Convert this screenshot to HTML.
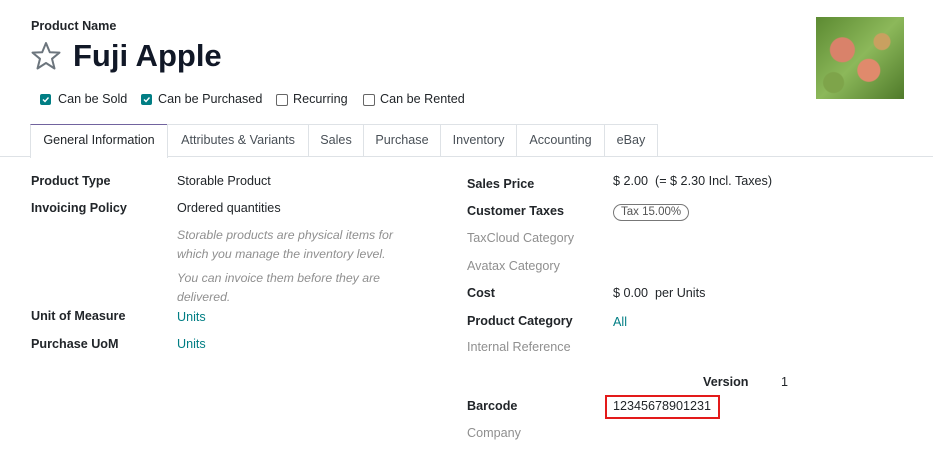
<!DOCTYPE html>
<html><head><style>
body{margin:0;width:933px;height:467px;background:#fff;font-family:"Liberation Sans",sans-serif;color:#212529;position:relative;overflow:hidden;font-size:12.6px}
.a{position:absolute;white-space:nowrap}
.b{font-weight:bold}
.g{color:#8f8f8f}
.l{color:#017e84}
.i{font-style:italic;color:#8f8f8f;font-size:12.3px}
.cb{position:absolute;width:11px;height:11px;border-radius:2px}
.on{background:#017e84}
.off{border:1px solid #666;background:#fff;width:10px;height:10px}
.tab{position:absolute;top:124px;height:32px;border:1px solid #dee2e6;border-bottom:none;box-sizing:border-box;text-align:center;line-height:31px;color:#495057;font-size:12.6px}
</style></head><body>
<div class="a b" style="left:31px;top:19px;font-size:12.6px">Product Name</div>
<svg class="a" style="left:30px;top:41px" width="32" height="30" viewBox="0 0 32 30"><path d="M16 2 L19.8 11.2 L29.5 11.6 L22 17.8 L24.5 27.5 L16 22 L7.5 27.5 L10 17.8 L2.5 11.6 L12.2 11.2 Z" fill="none" stroke="#6c757d" stroke-width="2" stroke-linejoin="round"/></svg>
<div class="a b" style="left:73px;top:38px;font-size:31px;color:#111827">Fuji Apple</div>
<div class="cb on" style="left:40px;top:94px"></div><svg class="a" style="left:40px;top:94px" width="11" height="11"><path d="M3 5.5 L5 7.5 L8.5 3.5" stroke="#fff" stroke-width="1.4" fill="none"/></svg>
<div class="a" style="left:58px;top:92px">Can be Sold</div>
<div class="cb on" style="left:141px;top:94px"></div><svg class="a" style="left:141px;top:94px" width="11" height="11"><path d="M3 5.5 L5 7.5 L8.5 3.5" stroke="#fff" stroke-width="1.4" fill="none"/></svg>
<div class="a" style="left:158px;top:92px">Can be Purchased</div>
<div class="cb off" style="left:276px;top:94px"></div>
<div class="a" style="left:293px;top:92px">Recurring</div>
<div class="cb off" style="left:363px;top:94px"></div>
<div class="a" style="left:380px;top:92px">Can be Rented</div>
<div class="a" style="left:816px;top:17px;width:88px;height:82px;background:radial-gradient(circle at 30% 40%,#d9826a 0 12px,transparent 13px),radial-gradient(circle at 60% 65%,#e08a6c 0 11px,transparent 12px),radial-gradient(circle at 75% 30%,#c9a060 0 8px,transparent 9px),radial-gradient(circle at 20% 80%,#7ea44a 0 10px,transparent 11px),linear-gradient(135deg,#5c8a32,#8cb85a 50%,#4f7a2a)"></div>
<div style="position:absolute;left:0;top:156px;width:933px;border-top:1px solid #dee2e6"></div>
<div class="tab" style="left:30px;width:138px;background:#fff;height:34px;color:#212529;border-top-color:#71639e">General Information</div>
<div class="tab" style="left:167px;width:142px">Attributes &amp; Variants</div>
<div class="tab" style="left:308px;width:56px">Sales</div>
<div class="tab" style="left:363px;width:78px">Purchase</div>
<div class="tab" style="left:440px;width:77px">Inventory</div>
<div class="tab" style="left:516px;width:89px">Accounting</div>
<div class="tab" style="left:604px;width:54px">eBay</div>

<div class="a b" style="left:31px;top:174px">Product Type</div><div class="a" style="left:177px;top:174px">Storable Product</div>
<div class="a b" style="left:31px;top:201px">Invoicing Policy</div><div class="a" style="left:177px;top:201px">Ordered quantities</div>
<div class="a i" style="left:177px;top:228px">Storable products are physical items for</div>
<div class="a i" style="left:177px;top:247px">which you manage the inventory level.</div>
<div class="a i" style="left:177px;top:271px">You can invoice them before they are</div>
<div class="a i" style="left:177px;top:290px">delivered.</div>
<div class="a b" style="left:31px;top:309px">Unit of Measure</div><div class="a l" style="left:177px;top:310px">Units</div>
<div class="a b" style="left:31px;top:337px">Purchase UoM</div><div class="a l" style="left:177px;top:337px">Units</div>

<div class="a b" style="left:467px;top:177px">Sales Price</div><div class="a" style="left:613px;top:174px">$ 2.00 &nbsp;(= $ 2.30 Incl. Taxes)</div>
<div class="a b" style="left:467px;top:204px">Customer Taxes</div>
<div class="a" style="left:613px;top:204px;border:1px solid #777;border-radius:9px;padding:0 7px;font-size:11.5px;line-height:15px;color:#555">Tax 15.00%</div>
<div class="a g" style="left:467px;top:231px">TaxCloud Category</div>
<div class="a g" style="left:467px;top:259px">Avatax Category</div>
<div class="a b" style="left:467px;top:286px">Cost</div><div class="a" style="left:613px;top:286px">$ 0.00 &nbsp;per Units</div>
<div class="a b" style="left:467px;top:314px">Product Category</div><div class="a l" style="left:613px;top:315px">All</div>
<div class="a g" style="left:467px;top:340px">Internal Reference</div>
<div class="a b" style="left:703px;top:375px">Version</div><div class="a" style="left:781px;top:375px">1</div>
<div class="a b" style="left:467px;top:399px">Barcode</div>
<div class="a" style="left:605px;top:395px;width:111px;height:20px;border:2px solid #e31a1a"></div>
<div class="a" style="left:613px;top:399px">12345678901231</div>
<div class="a g" style="left:467px;top:426px">Company</div>
</body></html>
